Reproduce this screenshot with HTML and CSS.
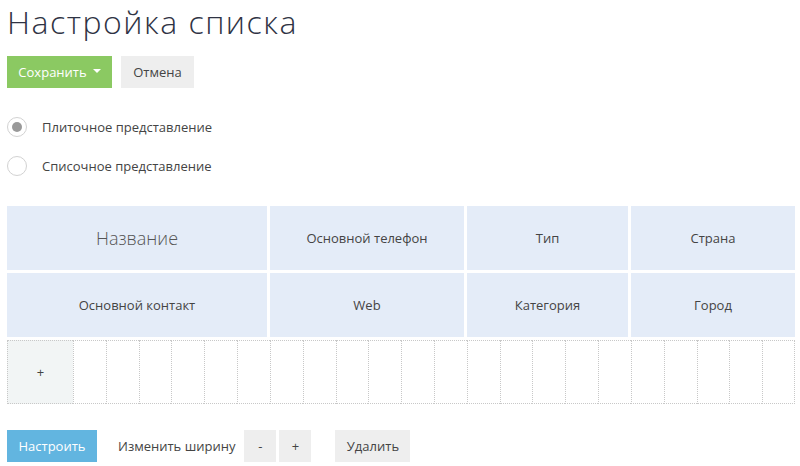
FILE: index.html
```html
<!DOCTYPE html>
<html lang="ru">
<head>
<meta charset="utf-8">
<title>Настройка списка</title>
<link rel="stylesheet" href="styles.css">
</head>
<body>
<h1 class="title">Настройка списка</h1>
<div class="actions">
  <button class="btn btn-save">Сохранить <span class="caret"></span></button>
  <button class="btn btn-gray btn-cancel">Отмена</button>
</div>
<div class="views">
  <label class="view"><span class="radio checked"></span>Плиточное представление</label>
  <label class="view"><span class="radio"></span>Списочное представление</label>
</div>
<div class="tiles">
  <div class="tile tile-name">Название</div>
  <div class="tile">Основной телефон</div>
  <div class="tile">Тип</div>
  <div class="tile">Страна</div>
  <div class="tile">Основной контакт</div>
  <div class="tile">Web</div>
  <div class="tile">Категория</div>
  <div class="tile">Город</div>
</div>
<div class="slots">
  <div class="slot slot-add">+</div>
  <div class="slot"></div><div class="slot"></div><div class="slot"></div><div class="slot"></div>
  <div class="slot"></div><div class="slot"></div><div class="slot"></div><div class="slot"></div>
  <div class="slot"></div><div class="slot"></div><div class="slot"></div><div class="slot"></div>
  <div class="slot"></div><div class="slot"></div><div class="slot"></div><div class="slot"></div>
  <div class="slot"></div><div class="slot"></div><div class="slot"></div><div class="slot"></div>
  <div class="slot"></div><div class="slot slot-last"></div>
</div>
<div class="toolbar">
  <button class="btn btn-blue btn-setup">Настроить</button>
  <span class="width-label">Изменить ширину</span>
  <button class="btn btn-gray btn-small">-</button>
  <button class="btn btn-gray btn-small btn-plus">+</button>
  <button class="btn btn-gray btn-delete">Удалить</button>
</div>
</body>
</html>
```

FILE: styles.css
```css
html, body {
  margin: 0;
  background: #fff;
}
body {
  padding: 0 5px 0 7px;
  font-family: "Open Sans", "Noto Sans", "DejaVu Sans", sans-serif;
  font-size: 13px;
  color: #444;
}
.title {
  margin: 0;
  font-size: 32px;
  font-weight: 300;
  line-height: 44px;
  color: #2f3344;
  letter-spacing: 1.5px;
}
.btn {
  height: 32px;
  border: 0;
  border-radius: 0;
  padding: 0;
  font-family: inherit;
  font-size: 13px;
  color: #444;
  cursor: pointer;
}
.btn-gray {
  background: #eeeeee;
}
.actions {
  margin-top: 12px;
  display: flex;
  gap: 9px;
}
.btn-save {
  width: 105px;
  background: #8bc962;
  color: #fff;
  display: flex;
  align-items: center;
  justify-content: center;
  gap: 6px;
}
.caret {
  width: 0;
  height: 0;
  border-left: 4px solid transparent;
  border-right: 4px solid transparent;
  border-top: 4px solid #fff;
  margin-top: -2px;
}
.btn-cancel {
  width: 73px;
}
.views {
  margin-top: 19px;
}
.view {
  display: flex;
  align-items: center;
  height: 39px;
}
.radio {
  box-sizing: border-box;
  width: 20px;
  height: 20px;
  border: 1px solid #d2d2d2;
  border-radius: 50%;
  margin-right: 15px;
  display: flex;
  align-items: center;
  justify-content: center;
}
.radio.checked::after {
  content: "";
  width: 10px;
  height: 10px;
  border-radius: 50%;
  background: #999;
}
.tiles {
  margin-top: 21px;
  display: grid;
  grid-template-columns: 260px 194px 161px 164px;
  grid-template-rows: 64px 64px;
  gap: 3px;
}
.tile {
  background: #e4ecf8;
  display: flex;
  align-items: center;
  justify-content: center;
  text-align: center;
}
.tile-name {
  font-size: 18px;
  font-weight: 300;
  color: #555;
}
.slots {
  margin-top: 3px;
  width: 788px;
  height: 64px;
  display: grid;
  grid-template-columns: 66px repeat(22, 1fr);
}
.slot {
  border-top: 1px dotted #c8c8c8;
  border-bottom: 1px dotted #c8c8c8;
  border-left: 1px dotted #c8c8c8;
}
.slot-last {
  border-right: 1px dotted #c8c8c8;
}
.slot-add {
  background: #f2f5f5;
  display: flex;
  align-items: center;
  justify-content: center;
  font-size: 13px;
  color: #444;
}
.toolbar {
  margin-top: 26px;
  display: flex;
  align-items: center;
}
.btn-blue {
  background: #62b5e0;
  color: #fff;
}
.btn-setup {
  width: 90px;
}
.width-label {
  margin-left: 21px;
  margin-right: 9px;
}
.btn-small {
  width: 32px;
}
.btn-plus {
  margin-left: 3px;
}
.btn-delete {
  width: 75px;
  margin-left: 24px;
}
```
